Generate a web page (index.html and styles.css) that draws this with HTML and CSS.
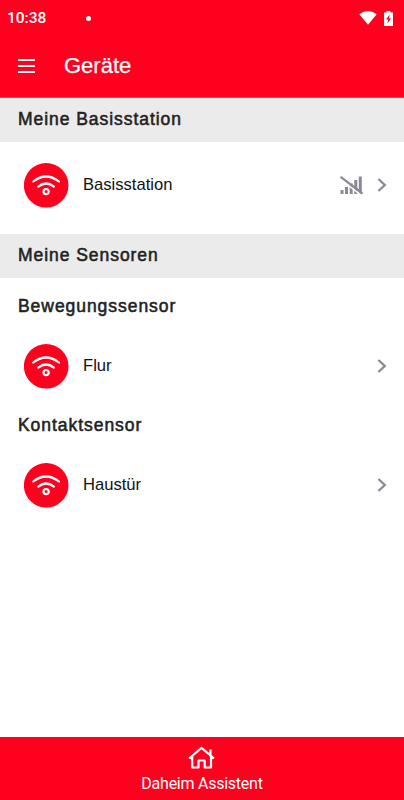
FILE: index.html
```html
<!DOCTYPE html>
<html lang="de">
<head>
<meta charset="utf-8">
<meta name="viewport" content="width=device-width, initial-scale=1">
<title>Geräte</title>
<link rel="stylesheet" href="styles.css">
</head>
<body>
<svg width="0" height="0" class="defs" aria-hidden="true">
  <symbol id="wifi" viewBox="0 0 45 45">
    <circle cx="22.2" cy="22.3" r="22.3" fill="#ff001f"/>
    <g fill="none" stroke="#fff" stroke-width="2.2" stroke-linecap="round">
      <path d="M9.200 18.5Q22 8.500 35 18.500"/>
      <path d="M14.300 23.600Q22 17.400 29.900 23.600"/>
      <circle cx="22.1" cy="28.6" r="2.6"/>
    </g>
  </symbol>
  <symbol id="chevron" viewBox="0 0 10 16">
    <path d="M1.400 2L7.800 8L1.400 14" fill="none" stroke="#8a8994" stroke-width="2.3"/>
  </symbol>
</svg>
<div class="screen">
  <header class="header">
    <div class="status">
      <span class="time">10:38</span>
      <span class="dot"></span>
      <svg class="signal" width="18" height="14" viewBox="0 0 18 14"><path d="M.3 3.2Q9-3.2 17.7 3.2L9 13.8Z" fill="#fff"/></svg>
      <svg class="battery" width="9" height="15" viewBox="0 0 9 15"><path d="M2.5 0h4v1.5H9V15H0V1.5h2.5Z" fill="#fff"/><path d="M5.7 3.5L2 8.6h2.2l-.8 4L7 7.4H4.9Z" fill="#ff001f"/></svg>
    </div>
    <div class="toolbar">
      <svg width="17" height="14" viewBox="0 0 17 14"><path d="M0 1h17M0 7h17M0 13h17" stroke="#fff" stroke-width="2.2"/></svg>
      <h1>Geräte</h1>
    </div>
  </header>
  <main>
    <h2 class="band">Meine Basisstation</h2>
    <div class="row base">
      <svg class="icon"><use href="#wifi"/></svg>
      <span class="name">Basisstation</span>
      <svg class="offline" width="24" height="20" viewBox="0 0 24 20"><path fill="#8a8994" d="M.5 15h3v4h-3zM5 12h3v7H5zM9.700 8.500h3V19h-3zM14.300 5h3v14h-3zM18.800 1.500h3V19h-3z"/><path d="M-.5 3.500L21 20" stroke="#fff" stroke-width="1.500"/><path d="M.5 1.800L22.500 18.500" stroke="#8a8994" stroke-width="2.200"/></svg>
      <svg class="chevron"><use href="#chevron"/></svg>
    </div>
    <h2 class="band">Meine Sensoren</h2>
    <h3>Bewegungssensor</h3>
    <div class="row">
      <svg class="icon"><use href="#wifi"/></svg>
      <span class="name">Flur</span>
      <svg class="chevron"><use href="#chevron"/></svg>
    </div>
    <h3 class="contact">Kontaktsensor</h3>
    <div class="row">
      <svg class="icon"><use href="#wifi"/></svg>
      <span class="name">Haustür</span>
      <svg class="chevron"><use href="#chevron"/></svg>
    </div>
  </main>
  <footer class="footer">
    <svg width="28" height="23" viewBox="0 0 28 23"><path d="M1.200 12.500L13.500 1.800L26 12.500M4.200 10V21.500H10.500V14.500H16.700V21.500H23V10M22.500 9V3.500" fill="none" stroke="#fff" stroke-width="2.200" stroke-linejoin="round"/></svg>
    <span>Daheim Assistent</span>
  </footer>
</div>
</body>
</html>
```
FILE: styles.css
```css
* { box-sizing: border-box; }
body { margin: 0; background: #fff; font-family: "Liberation Sans", Arial, sans-serif; color: #222; }
svg { display: block; flex: none; }
.defs { display: none; }
.screen { display: flex; flex-direction: column; height: 800px; }
.header { height: 98px; background: #ff001f; color: #fff; border-bottom: 1px solid #ff3b30; }
.status { display: flex; align-items: center; height: 36px; padding: 0 11px 0 7px; }
.time { width: 79px; font: 500 15.5px/18px Roboto, sans-serif; }
.dot { width: 5px; height: 5px; border-radius: 50%; background: #fff; }
.signal { margin-left: auto; margin-right: 7px; }
.toolbar { display: flex; align-items: center; height: 60px; padding-left: 18px; gap: 29px; }
h1, h2, h3 { margin: 0; font-weight: 400; }
h1 { font-size: 22px; line-height: 26px; -webkit-text-stroke: 0.25px #fff; }
h2, h3 { padding-left: 18px; font-size: 17.5px; letter-spacing: 0.95px; -webkit-text-stroke: 0.55px #222; }
.band { height: 44px; line-height: 43px; background: #ebebeb; }
h3 { height: 44px; line-height: 56px; }
h3.contact { height: 30px; line-height: 28px; }
.row { display: flex; align-items: center; height: 89px; padding: 0 17px 0 24px; color: #111; }
.row.base { height: 92px; padding-bottom: 5px; }
.icon { width: 45px; height: 45px; margin-right: 14px; }
.name { margin-right: auto; padding-bottom: 2px; font-size: 16.6px; line-height: 20px; }
.offline { margin-right: 13px; margin-bottom: 1px; }
.chevron { width: 10px; height: 16px; margin-bottom: 1px; }
.footer { display: flex; flex-direction: column; align-items: center; height: 63px; margin-top: auto; padding-top: 9px; background: #ff001f; color: #fff; }
.footer span { margin-top: 5px; font: 400 16px/20px Roboto, sans-serif; letter-spacing: -0.25px; }
```
